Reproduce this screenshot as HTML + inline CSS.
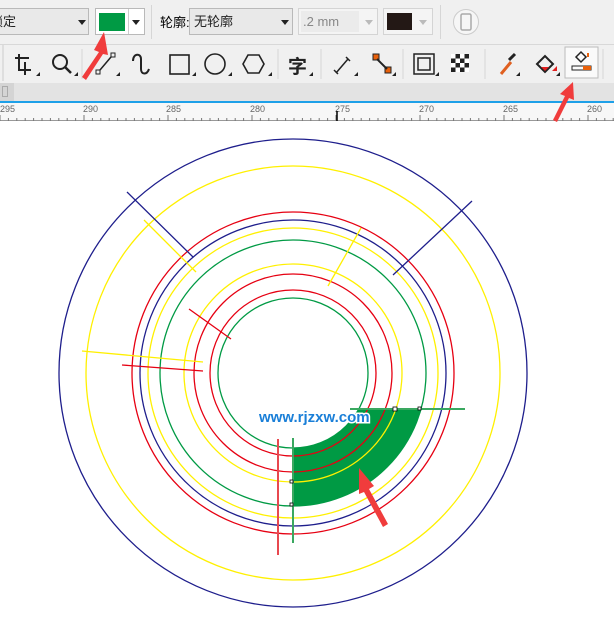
<!DOCTYPE html>
<html><head><meta charset="utf-8"><style>
*{margin:0;padding:0;box-sizing:border-box}
body{width:614px;height:643px;overflow:hidden;background:#fff;font-family:"Liberation Sans","Noto Sans CJK SC",sans-serif;position:relative}
.abs{position:absolute}
.dd{position:absolute;border:1px solid #b9b9b9;background:#e9e9e9;font-size:13px;color:#222;line-height:26px;padding-left:4px;overflow:hidden;white-space:nowrap}
.tri{position:absolute;width:0;height:0;border-left:4px solid transparent;border-right:4px solid transparent;border-top:5px solid #222}
.sep{position:absolute;width:1px;background:#d6d6d6}
</style></head><body>
<div class="abs" style="left:0;top:0;width:614px;height:83px;background:#f0f0f0"></div>
<div class="abs" style="left:0;top:44px;width:614px;height:1px;background:#d8d8d8"></div>
<!-- row1 -->
<div class="dd" style="left:-2px;top:8px;width:91px;height:27px"><span style="margin-left:-13px">锁定</span></div><div class="tri" style="left:78px;top:20px"></div>
<div class="abs" style="left:95px;top:8px;width:50px;height:27px;border:1px solid #b9b9b9;background:#fff"></div>
<div class="abs" style="left:99px;top:13px;width:26px;height:18px;background:#009a44"></div>
<div class="abs" style="left:128px;top:9px;width:1px;height:25px;background:#ccc"></div><div class="tri" style="left:132px;top:20px"></div>
<div class="sep" style="left:151px;top:5px;height:34px"></div>
<div class="abs" style="left:160px;top:12px;font-size:13px">轮廓:</div>
<div class="dd" style="left:189px;top:8px;width:104px;height:27px">无轮廓</div><div class="tri" style="left:281px;top:20px"></div>
<div class="abs" style="left:298px;top:8px;width:80px;height:27px;border:1px solid #d4d4d4;background:#f4f4f4"></div>
<div class="abs" style="left:301px;top:11px;width:58px;height:21px;background:#ebebeb;font-size:13px;color:#888;line-height:21px;padding-left:2px">.2 mm</div>
<div class="tri" style="left:365px;top:20px;border-top-color:#bbb"></div>
<div class="abs" style="left:383px;top:8px;width:50px;height:27px;border:1px solid #d4d4d4;background:#f4f4f4"></div>
<div class="abs" style="left:387px;top:13px;width:25px;height:17px;background:#231815"></div>
<div class="tri" style="left:419px;top:20px;border-top-color:#bbb"></div>
<div class="sep" style="left:440px;top:5px;height:34px"></div>
<svg class="abs" style="left:452px;top:8px" width="28" height="28"><circle cx="14" cy="14" r="12.5" fill="#f6f6f6" stroke="#ccc"/><rect x="9" y="6" width="10" height="16" rx="1.5" fill="none" stroke="#aaa" stroke-width="1.5"/></svg>
<!-- row2 icons -->
<svg class="abs" style="left:0;top:45px" width="614" height="38">
<g stroke="#222" stroke-width="2" fill="none">
<line x1="3" y1="0" x2="3" y2="36" stroke="#ccc" stroke-width="1"/>
<path d="M15 13h14M19 9v16h12M25 17v13"/>
<circle cx="60" cy="17" r="7"/><line x1="65" y1="22" x2="71" y2="28" stroke-width="2.5"/>
<rect x="111" y="8" width="4" height="4" stroke-width="1"/><rect x="96" y="25" width="4" height="4" stroke-width="1"/><line x1="111" y1="12" x2="100" y2="25" stroke-width="1.5"/>
<path d="M133 16c0-8 8-8 8-2v10c0 6 6 6 8 0"/>
<rect x="170" y="10" width="19" height="19" stroke-width="1.6"/>
<circle cx="215" cy="19" r="10" stroke-width="1.6"/>
<path d="M248 10h11l5 9-5 9h-11l-5-9z" stroke-width="1.6"/>
<path d="M336 28l12-14" stroke-width="1.5"/><path d="M334 25l4 4M346 12l4 4" stroke-width="1.5"/>
<rect x="414" y="9" width="20" height="20" stroke-width="1.5"/><rect x="418" y="13" width="12" height="12" stroke-width="1.5"/>
<line x1="501" y1="29" x2="511" y2="17" stroke="#e06020" stroke-width="3"/><line x1="509" y1="15" x2="515" y2="9" stroke-width="3"/>
<path d="M537 19l8-8 8 8-8 8z" stroke-width="2"/>
</g>
<rect x="373" y="9" width="6" height="6" fill="#e8600a" stroke="#222"/><rect x="385" y="22" width="6" height="6" fill="#e8600a" stroke="#222"/><line x1="377" y1="14" x2="387" y2="24" stroke="#222" stroke-width="2"/>
<g fill="#222"><rect x="451" y="9" width="18" height="18"/></g>
<g fill="#fff"><rect x="451" y="9" width="4.5" height="4.5"/><rect x="460" y="9" width="4.5" height="4.5"/><rect x="455.5" y="13.5" width="4.5" height="4.5"/><rect x="464.5" y="13.5" width="4.5" height="4.5"/><rect x="451" y="18" width="4.5" height="4.5"/><rect x="460" y="18" width="4.5" height="4.5"/><rect x="455.5" y="22.5" width="4.5" height="4.5"/><rect x="464.5" y="22.5" width="4.5" height="4.5"/></g>
<path d="M541 22l4 4 4-4z" fill="#e02020"/><path d="M552 26l5-5v5z" fill="#e02020"/>
<text x="288" y="28" font-size="19" font-weight="bold" fill="#222" font-family="Noto Sans CJK SC,sans-serif">字</text>
<rect x="565" y="2" width="33" height="31" fill="#fafafa" stroke="#bbb"/>
<path d="M576 12l5-5 5 5-5 5z" fill="none" stroke="#222" stroke-width="1.5"/><rect x="587" y="8" width="2" height="4" fill="#e8600a"/>
<rect x="572" y="21" width="19" height="4" fill="none" stroke="#222"/><rect x="583" y="21" width="8" height="4" fill="#e8600a"/>
<g fill="#222"><path d="M36 31h4v-4z"/><path d="M74 31h4v-4z"/><path d="M116 31h4v-4z"/><path d="M192 31h4v-4z"/><path d="M228 31h4v-4z"/><path d="M268 31h4v-4z"/><path d="M309 31h4v-4z"/><path d="M354 31h4v-4z"/><path d="M392 31h4v-4z"/><path d="M435 31h4v-4z"/><path d="M516 31h4v-4z"/><path d="M556 31h4v-4z"/></g>
<g stroke="#d6d6d6"><line x1="82" y1="4" x2="82" y2="34"/><line x1="278" y1="4" x2="278" y2="34"/><line x1="321" y1="4" x2="321" y2="34"/><line x1="403" y1="4" x2="403" y2="34"/><line x1="485" y1="4" x2="485" y2="34"/><line x1="603" y1="4" x2="603" y2="34"/></g>
</svg>
<!-- strip -->
<div class="abs" style="left:0;top:83px;width:614px;height:18px;background:#e3e3e3"></div>
<div class="abs" style="left:0;top:83px;width:14px;height:18px;background:#d4d4d4"></div>
<div class="abs" style="left:2px;top:86px;width:6px;height:11px;border:1px solid #aaa"></div>
<div class="abs" style="left:0;top:101px;width:614px;height:2px;background:#1ea0e8"></div>
<div class="abs" style="left:0;top:103px;width:614px;height:18px;background:#f7f7f7;border-bottom:1px solid #999"></div>
<svg class="abs" style="left:0;top:103px" width="614" height="18">
<g font-size="9" fill="#666" font-family="Liberation Sans"><text x="0" y="9">295</text><text x="83" y="9">290</text><text x="166" y="9">285</text><text x="250" y="9">280</text><text x="335" y="9">275</text><text x="419" y="9">270</text><text x="503" y="9">265</text><text x="587" y="9">260</text></g>
<g stroke="#777"><path d="M0 12v6M84 12v6M168 12v6M252 12v6M336 12v6M420 12v6M504 12v6M588 12v6" /><path d="M8.4 15v3M16.8 15v3M25.2 15v3M33.6 15v3M42 15v3M50.4 15v3M58.8 15v3M67.2 15v3M75.6 15v3M92.4 15v3M100.8 15v3M109.2 15v3M117.6 15v3M126 15v3M134.4 15v3M142.8 15v3M151.2 15v3M159.6 15v3M176.4 15v3M184.8 15v3M193.2 15v3M201.6 15v3M210 15v3M218.4 15v3M226.8 15v3M235.2 15v3M243.6 15v3M260.4 15v3M268.8 15v3M277.2 15v3M285.6 15v3M294 15v3M302.4 15v3M310.8 15v3M319.2 15v3M327.6 15v3M344.4 15v3M352.8 15v3M361.2 15v3M369.6 15v3M378 15v3M386.4 15v3M394.8 15v3M403.2 15v3M411.6 15v3M428.4 15v3M436.8 15v3M445.2 15v3M453.6 15v3M462 15v3M470.4 15v3M478.8 15v3M487.2 15v3M495.6 15v3M512.4 15v3M520.8 15v3M529.2 15v3M537.6 15v3M546 15v3M554.4 15v3M562.8 15v3M571.2 15v3M579.6 15v3M596.4 15v3M604.8 15v3M613.2 15v3"/><path d="M337 8v10" stroke="#000" stroke-width="1.5"/></g>
</svg>
<!-- drawing -->
<svg class="abs" style="left:0;top:0" width="614" height="643">
<path d="M293 448A75 75 0 0 0 359 409L421 409A133 133 0 0 1 293 506Z" fill="#009a44"/>
<g fill="none" stroke-width="1.3">
<circle cx="293" cy="373" r="234" stroke="#1e1e8c"/>
<circle cx="293" cy="373" r="207" stroke="#fff000"/>
<circle cx="293" cy="373" r="161" stroke="#e60012"/>
<circle cx="293" cy="373" r="153" stroke="#1e1e8c"/>
<circle cx="293" cy="373" r="145" stroke="#fff000"/>
<circle cx="293" cy="373" r="133" stroke="#009a44"/>
<circle cx="293" cy="373" r="109" stroke="#fff000"/>
<circle cx="293" cy="373" r="99" stroke="#e60012"/>
<circle cx="293" cy="373" r="83" stroke="#e60012"/>
<circle cx="293" cy="373" r="75" stroke="#009a44"/>
<line x1="127" y1="192" x2="193" y2="257" stroke="#1e1e8c"/>
<line x1="144" y1="220" x2="196" y2="272" stroke="#fff000"/>
<line x1="361" y1="228" x2="328" y2="286" stroke="#fff000"/>
<line x1="472" y1="201" x2="393" y2="275" stroke="#1e1e8c"/>
<line x1="189" y1="309" x2="231" y2="339" stroke="#e60012"/>
<line x1="82" y1="351" x2="203" y2="362" stroke="#fff000"/>
<line x1="122" y1="365" x2="203" y2="371" stroke="#e60012"/>
<line x1="278" y1="439" x2="278" y2="555" stroke="#e8484f" stroke-width="2"/>
<line x1="293" y1="438" x2="293" y2="543" stroke="#3aa860" stroke-width="2"/>
<line x1="350" y1="409" x2="465" y2="409" stroke="#3aa860" stroke-width="2"/>
</g>
<g fill="#fff" stroke="#000" stroke-width="0.8"><rect x="393" y="407" width="4" height="4"/><rect x="418" y="407" width="3" height="3"/><rect x="290" y="480" width="3" height="3"/><rect x="290" y="503" width="3" height="3"/></g>
<text x="259" y="422" font-size="15" font-weight="bold" fill="#1a7fd8" stroke="#fff" stroke-width="3" paint-order="stroke" font-family="Liberation Sans">www.rjzxw.com</text>
<g fill="#f03c3c">
<path d="M359 468L374 486L369 489L388 524L383 527L364 492L359 494Z"/>
<path d="M104 32L108 55L103 54L86 80L82 77L99 52L94 50Z"/>
<path d="M573 82L574 100L569 98L557 122L553 120L565 96L560 94Z"/>
</g>
</svg>
</body></html>
